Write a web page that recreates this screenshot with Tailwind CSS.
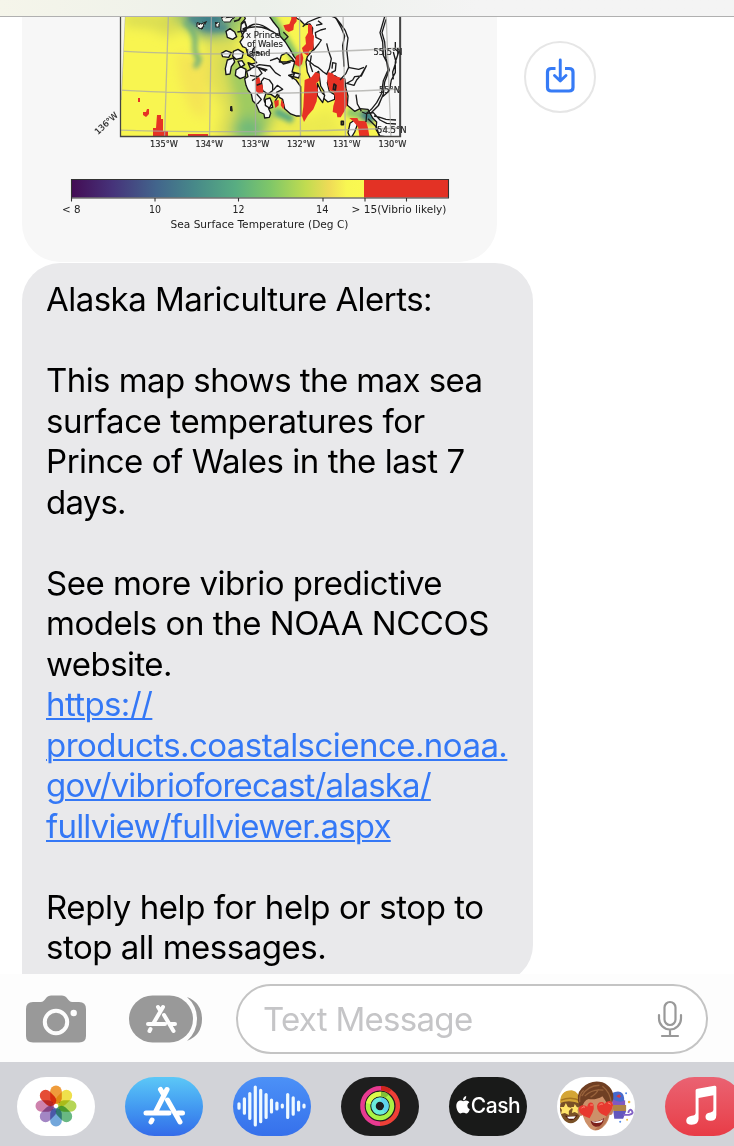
<!DOCTYPE html>
<html lang="en">
<head>
<meta charset="utf-8">
<title>Messages</title>
<script src="https://cdn.jsdelivr.net/npm/@tailwindcss/browser@4"></script>
</head>
<body class="bg-white">
<div class="flex h-[1146px] w-[734px] flex-col overflow-hidden bg-white font-['Inter',sans-serif]">
  <header class="h-[17px] shrink-0 border-b border-[#b0b0b0] bg-linear-to-r from-[#f5f5ea] via-[#ecf0ea] via-35% to-[#f4f4f4] to-65%"></header>

  <main class="flex h-[957px] shrink-0 flex-col overflow-hidden pl-[22px]">
    <div class="flex h-[246px] shrink-0 items-start gap-[27px]">
      <div class="h-[245px] w-[475px] shrink-0 overflow-hidden rounded-b-[38px] bg-[#f7f7f7]">
        <svg class="block" width="475" height="245" viewBox="22 17 475 245" font-family="DejaVu Sans, sans-serif" fill="#222">
          <defs>
            <clipPath id="map"><rect x="120.500" y="10" width="280" height="126"/></clipPath>
            <filter id="soft" x="-50%" y="-50%" width="200%" height="200%"><feGaussianBlur stdDeviation="6"/></filter>
            <filter id="soft2" x="-50%" y="-50%" width="200%" height="200%"><feGaussianBlur stdDeviation="2.500"/></filter>
            <filter id="jag" x="-5%" y="-5%" width="110%" height="110%"><feTurbulence type="fractalNoise" baseFrequency=".18" numOctaves="2" seed="4"/><feDisplacementMap in="SourceGraphic" scale="3" xChannelSelector="R" yChannelSelector="G"/></filter>
            <linearGradient id="bar"><stop offset="0" stop-color="#430c54"/><stop offset=".14" stop-color="#46337a"/><stop offset=".29" stop-color="#42658c"/><stop offset=".42" stop-color="#478989"/><stop offset=".56" stop-color="#58ad82"/><stop offset=".68" stop-color="#80c768"/><stop offset=".8" stop-color="#c1dc50"/><stop offset=".88" stop-color="#efdb57"/><stop offset=".94" stop-color="#f8f752"/><stop offset="1" stop-color="#faf951"/></linearGradient>
          </defs>
          <g clip-path="url(#map)">
            <rect x="119" y="10" width="283" height="128" fill="#f8f550"/>
            <g filter="url(#soft)">
              <path d="M124 14H170L185 27L170 37L150 28L124 26Z" fill="#d9dc52"/>
              <path d="M165 10H250L240 36L215 42L195 36Z" fill="#9bc768"/>
              <path d="M180 8H235L222 30L205 35L192 24Z" fill="#3a7d8b"/>
              <path d="M205 40L235 38L250 90L262 140H215L222 110L208 80Z" fill="#dfdf55"/>
              <path d="M224 60L240 58L256 85L280 110L300 138H228L236 110Z" fill="#9fcb61"/>
              <path d="M236 122L252 116L262 126V140H236Z" fill="#6fb978"/>
              <path d="M176 52L210 60L206 120L190 110L180 80Z" fill="#f4e455"/>
              <path d="M276 112L310 118L330 108L345 138H266Z" fill="#ecea50"/>
            </g>
            <g filter="url(#soft2)" fill="none">
              <path d="M184 22Q196 30 195 43T199 58Q199 64 194 67" stroke="#6dae7b" stroke-width="5"/>
              <path d="M190 17Q204 30 228 28" stroke="#4b898a" stroke-width="7"/>
              <path d="M268 12Q280 32 288 45T299 66" stroke="#7dc06b" stroke-width="9"/>
              <path d="M275 111L293 120" stroke="#58a982" stroke-width="8"/>
              <path d="M347 112L375 117" stroke="#8dc56a" stroke-width="9"/>
              <path d="M362 113L374 120" stroke="#3f8189" stroke-width="11"/>
              <path d="M297 72L303 82M296 95L301 115" stroke="#ece84f" stroke-width="6"/>
            </g>
            <g transform="translate(220 12) scale(.33333)" stroke-linejoin="round">
              <g fill="#f8f8f8" stroke="#151515" stroke-width="4">
                <path d="M68 0L76 20L64 34L62 54L70 76L60 90L68 104L78 108L84 130L98 138L110 152L96 156L84 152L92 172L80 178L84 194L74 200L78 220L84 234L94 246L98 266L108 276L118 300L132 306L134 318L148 316L152 304L146 290L158 286L154 268L142 262L134 270L132 262L138 244L154 248L166 256L172 246L178 256L188 262L194 290L212 306L228 312L242 312L242 224L228 204L206 190L236 198L240 186L216 180L224 150L214 146L200 150L178 150L184 130L200 122L216 138L230 158L236 150L222 134L210 112L196 90L180 72L176 50L160 30L146 10L138 0Z"/>
                <path d="M232 0L228 18L240 24L254 38L270 36L278 48L276 80L280 112L262 134L258 150L262 180L274 206L288 184L296 178L302 222L312 238L310 258L324 270L344 262L344 248L328 238L322 212L330 190L346 192L360 204L374 200L378 230L384 252L382 280L404 298L420 290L444 292L458 318L470 330L468 352L480 372L540 380V0Z"/>
                <path d="M4 8L20 0L36 2L40 12L24 26L8 24ZM18 58L30 50L44 60L50 74L38 82L22 76ZM4 124L18 116L34 122L26 136L8 134ZM40 118L54 112L70 122L66 138L48 142L38 132ZM22 144L40 138L44 150L34 164L30 186L18 188L16 170ZM48 174L62 164L78 172L76 194L60 200L46 190ZM54 148L66 146L74 158L62 166Z"/>
                <path d="M124 208L132 198L148 204L158 218L158 236L144 246L128 236ZM292 214L304 240L314 250L308 272L292 250ZM390 334L404 324L412 338L404 360L392 380L384 362ZM136 262L150 258L156 274L148 288L136 280Z"/>
              </g>
              <g fill="#e73225">
                <path d="M190 40L208 36L214 20L212 0L230 10V28L222 38L220 54L206 60L196 54ZM264 36L276 40L278 66L282 72L280 112L268 116L264 132L250 122L246 108L258 96L256 76L264 62ZM228 132L246 122L250 138L246 156L238 164L224 156ZM254 204L274 196L286 180L300 186L298 206L288 214L294 232L290 268L280 292L264 310L252 330L246 312L250 284ZM322 180L338 184L344 192L358 196L376 202L374 222L380 240L382 276L374 296L362 316L352 316L350 304L338 300L340 282L346 262L342 242L328 234L322 210ZM106 198L118 196L122 212L128 220L130 242L118 246L108 238ZM162 266L176 264L176 280L166 288ZM184 262L194 280L190 292L182 280ZM388 318H412L416 326L438 328L444 348L448 372H418L414 344L398 326Z"/>
              </g>
              <g fill="none" stroke="#1b1b1b" stroke-width="4">
                <path d="M248 44L264 30L288 20L304 14L322 8L348 18L362 36L376 56L384 78L380 112L386 166L378 184L360 204M328 0L350 22L364 48L374 72L368 100L372 164M494 14L480 62L488 90L490 130L500 150L504 174L490 206L484 246L470 272L454 292L440 304M498 22L486 62L494 90L498 140L508 174L494 210L490 246L476 280L450 306M526 90V112L536 120L526 150V182L514 204L508 236L486 256L474 282L456 300M520 120L528 150L518 180L520 202"/>
                <path d="M320 94L326 118L334 140L328 170L320 186M334 182L346 176L348 154L338 152L336 170M258 140L282 160L294 166L310 180L322 188M274 130L270 156L278 180M384 166L416 172L432 166M440 160L424 188L410 204L402 220L380 214L398 204L404 194L424 192L438 164M408 248L412 276L420 290L424 298M440 304L460 302L480 324L500 334L528 336M462 312L480 316L498 322L528 324M444 320L470 346L478 372M426 300L440 306L438 330"/>
                <path d="M150 146L172 138L190 156L212 150M92 170L118 158L150 162L166 182L182 192M90 190L114 194L126 184L114 166L138 178M84 154L106 164L142 174M190 60L204 74L192 86M160 234L172 220L188 232L168 242M206 190L224 184L216 202M96 206L112 196M110 246L124 262L112 276M166 266L178 248M280 116L296 96L304 84L288 76L286 62L302 54L318 50M288 40L306 36L294 26"/>
                <path d="M50 0L62 16L56 24L42 28M64 36L74 28L80 46L68 52M52 60L80 56M34 282L36 298M110 220L126 214M342 216L348 220L346 234L340 232ZM364 328H370V338H364Z" stroke-width="5"/>
                <path d="M64 76Q92 10 150 54M68 54Q120 28 178 72M108 104Q92 112 100 134M84 130Q112 112 128 130"/>
              </g>
            </g>
            <g filter="url(#jag)" fill="#f4f4ee" stroke="#202020" stroke-width="1.200"><path d="M197 22.500L201 24L206 22L204 26L201 29L197 27ZM215.500 23L219 22L219 27L216 27ZM222 17L234 16L230 22L224 22Z"/></g>
            <path d="M157 115H161V119H163V131H168V137H153V128H156ZM143 112H146L147 109H149V114L146 117L143 115ZM138 98H140V102H138ZM188 134H208V137H188Z" fill="#e63225"/>
            <path d="M231 106.500V111" stroke="#222" stroke-width="2"/>
            <g fill="none" stroke="#aaa9a6" stroke-opacity=".75" stroke-width="1.300">
              <path d="M125 12L121 100M168.500 12L164.500 138M211.500 12L209.500 138M255.500 12V138M299.500 12L300.500 138M343 12L345.500 138M386 12L391 138M119 51Q240 58 401 48M119 90Q250 97 401 89M119 130Q250 134 401 128"/>
            </g>
            <path d="M119 15L125 15L121 100L119 130Z" fill="#f7f7f7" opacity=".9"/>
          </g>
          <path d="M120.500 10V136.500H400.500V10" fill="none" stroke="#444" stroke-width="1.300"/>
          <g font-size="8.500" lengthAdjust="spacingAndGlyphs" stroke="#222" stroke-width=".15">
            <text x="246" y="38" textLength="34" lengthAdjust="spacingAndGlyphs">x Prince</text><text x="247" y="47" textLength="36" lengthAdjust="spacingAndGlyphs">of Wales</text><text x="246.500" y="56" textLength="24" lengthAdjust="spacingAndGlyphs">Island</text>
            <text x="373.500" y="54.500" textLength="29" lengthAdjust="spacingAndGlyphs">55.5°N</text><text x="379" y="93" textLength="21" lengthAdjust="spacingAndGlyphs">55°N</text><text x="377" y="132.500" textLength="29.500" lengthAdjust="spacingAndGlyphs">54.5°N</text>
            <text x="150" y="146.500" textLength="28" lengthAdjust="spacingAndGlyphs">135°W</text><text x="195.500" y="146.500" textLength="27.500" lengthAdjust="spacingAndGlyphs">134°W</text><text x="241.500" y="146.500" textLength="28" lengthAdjust="spacingAndGlyphs">133°W</text><text x="287" y="146.500" textLength="28" lengthAdjust="spacingAndGlyphs">132°W</text><text x="333" y="146.500" textLength="27.500" lengthAdjust="spacingAndGlyphs">131°W</text><text x="378.500" y="146.500" textLength="28" lengthAdjust="spacingAndGlyphs">130°W</text>
            <text transform="translate(98 135) rotate(-43)" textLength="28" lengthAdjust="spacingAndGlyphs">136°W</text>
          </g>
          <rect x="71.500" y="179.500" width="293" height="18" fill="url(#bar)"/><rect x="364" y="179.500" width="84.500" height="18" fill="#e33225"/>
          <path d="M71.500 179.500H448.500V198H71.500ZM71.500 198v3.500M155 198v3.500M238.500 198v3.500M323 198v3.500M365 198v3.500M406.500 198v3.500" fill="none" stroke="#333" stroke-width="1.100"/>
          <g font-size="10.400" fill="#222">
            <text x="62" y="213" textLength="18.500" lengthAdjust="spacingAndGlyphs">&lt; 8</text><text x="149" y="213" textLength="12" lengthAdjust="spacingAndGlyphs">10</text><text x="232.500" y="213" textLength="12" lengthAdjust="spacingAndGlyphs">12</text><text x="316" y="213" textLength="12.500" lengthAdjust="spacingAndGlyphs">14</text><text x="351.500" y="213" textLength="95" lengthAdjust="spacingAndGlyphs">&gt; 15(Vibrio likely)</text><text x="170.500" y="228" textLength="178" lengthAdjust="spacingAndGlyphs">Sea Surface Temperature (Deg C)</text>
          </g>
        </svg>
      </div>
      <button class="mt-[24px] flex size-[72px] items-center justify-center rounded-full border-2 border-[#e6e6e6]">
        <svg class="-mt-[2px]" width="32" height="38" viewBox="0 0 32 38" fill="none" stroke="#367bf6" stroke-linejoin="round"><path d="M11.500 11.500H7.500Q3.500 11.500 3.500 15V30.500Q3.500 34 7.500 34H25Q29 34 29 30.500V15Q29 11.500 25 11.500H21" stroke-width="3.200"/><path d="M16.250 3V24M10.500 18.500L16.250 24L22 18.500" stroke-width="2.900" stroke-linecap="round"/></svg>
      </button>
    </div>

    <div class="h-[720px] w-[511px] shrink-0 rounded-t-[38px] rounded-br-[38px] bg-[#e9e9eb] pl-[24px] pt-[16px] text-[33px] leading-[40.500px] whitespace-nowrap text-black">
      <p><span class="tracking-[-0.53px]">Alaska Mariculture Alerts:</span></p>
      <p class="mt-[40.500px]"><span class="tracking-[-0.57px]">This map shows the max sea</span><br><span class="tracking-[-0.39px]">surface temperatures for</span><br><span class="tracking-[-0.45px]">Prince of Wales in the last 7</span><br><span class="tracking-[-0.8px]">days.</span></p>
      <p class="mt-[40.500px]"><span class="tracking-[-0.5px]">See more vibrio predictive</span><br><span class="tracking-[-0.46px]">models on the NOAA NCCOS</span><br><span class="tracking-[-0.57px]">website.</span><br><a class="text-[#3478f6] underline decoration-2 underline-offset-[2px]"><span class="tracking-[-0.61px]">https://</span><br><span class="tracking-[-0.54px]">products.coastalscience.noaa.</span><br><span class="tracking-[-0.83px]">gov/vibrioforecast/alaska/</span><br><span class="tracking-[-0.8px]">fullview/fullviewer.aspx</span></a></p>
      <p class="mt-[40.500px]"><span class="tracking-[-0.42px]">Reply help for help or stop to</span><br><span class="tracking-[-0.48px]">stop all messages.</span></p>
    </div>
  </main>

  <section class="flex h-[88px] shrink-0 items-center bg-[#fdfdfd] pt-[2px] pl-[26px]">
    <svg width="60" height="48" viewBox="0 0 60 48"><path d="M7 7H15Q17 7 18.500 5L21 2Q22.500.5 25 .5H36Q38.500.5 40 2L42.500 5Q44 7 46 7H53Q60 7 60 14V41Q60 47.500 53 47.500H7Q0 47.500 0 41V14Q0 7 7 7Z" fill="#999"/><circle cx="30" cy="27" r="11.200" fill="none" stroke="#fdfdfd" stroke-width="4"/><circle cx="47.700" cy="18" r="3.200" fill="#fdfdfd"/></svg>
    <svg class="ml-[43px]" width="74" height="48" viewBox="0 0 74 48"><rect y=".5" width="64" height="47" rx="23.500" fill="#999"/><path d="M58 2Q73 8 73 24T58 46Q68 37 68 24T58 2Z" fill="#999"/><g stroke="#fdfdfd" stroke-width="4" stroke-linecap="round"><path d="M34 12L24 29M29 12L31.500 16M35 20L44.500 36M19 29H36M42 29H46M21.500 34L20.500 36"/></g></svg>
    <div class="ml-[33px] flex h-[70px] w-[472px] items-center justify-between rounded-full border-2 border-[#c4c4c4] bg-white pr-[23px] pl-[25px]">
      <span class="text-[33px] leading-[40px] tracking-[-0.7px] text-[#c5c5c7]">Text Message</span>
      <svg width="26" height="38" viewBox="0 0 26 38" fill="none" stroke="#999" stroke-width="2.200" stroke-linecap="round"><rect x="7.500" y="2" width="11" height="23" rx="5.500"/><path d="M2 15V18.500A11 11 0 0 0 24 18.500V15M13 30V36M5 36H21"/></svg>
    </div>
  </section>

  <nav class="flex h-[84px] shrink-0 gap-[30px] bg-[#d2d3d8] pt-[14.500px] pl-[17px]">
    <div class="flex h-[59px] w-[78px] shrink-0 items-center justify-center rounded-[30px] bg-white">
      <svg width="44" height="44" viewBox="-22 -22 44 44"><g class="mix-blend-multiply"><rect x="-5.800" y="-20.500" width="11.600" height="18.500" rx="5.800" fill="#ef9c3b"/></g><g class="mix-blend-multiply" transform="rotate(45)"><rect x="-5.800" y="-20.500" width="11.600" height="18.500" rx="5.800" fill="#efe04c"/></g><g class="mix-blend-multiply" transform="rotate(90)"><rect x="-5.800" y="-20.500" width="11.600" height="18.500" rx="5.800" fill="#b5d556"/></g><g class="mix-blend-multiply" transform="rotate(135)"><rect x="-5.800" y="-20.500" width="11.600" height="18.500" rx="5.800" fill="#69b883"/></g><g class="mix-blend-multiply" transform="rotate(180)"><rect x="-5.800" y="-20.500" width="11.600" height="18.500" rx="5.800" fill="#73a7db"/></g><g class="mix-blend-multiply" transform="rotate(225)"><rect x="-5.800" y="-20.500" width="11.600" height="18.500" rx="5.800" fill="#a386c4"/></g><g class="mix-blend-multiply" transform="rotate(270)"><rect x="-5.800" y="-20.500" width="11.600" height="18.500" rx="5.800" fill="#ce82ad"/></g><g class="mix-blend-multiply" transform="rotate(315)"><rect x="-5.800" y="-20.500" width="11.600" height="18.500" rx="5.800" fill="#e54d36"/></g><circle r="1.500" fill="#fff"/></svg>
    </div>
    <div class="flex h-[59px] w-[78px] shrink-0 items-center justify-center rounded-[30px] bg-linear-to-b from-[#5cc8f7] to-[#346be9]">
      <svg class="-mt-[2px]" width="44" height="40" viewBox="0 0 44 40" fill="none" stroke="#fff" stroke-width="5" stroke-linecap="round"><path d="M25 4.500L13 28M18.500 4.500L21.500 9.500M25.500 15L38 37M4 28H27M36 28H40.500M10 35L9 37"/></svg>
    </div>
    <div class="flex h-[59px] w-[78px] shrink-0 items-center justify-center rounded-[30px] bg-linear-to-b from-[#4c91f7] to-[#3670eb]">
      <svg width="72" height="46" viewBox="0 0 72 46" stroke="#eef9ff" stroke-width="3.200" stroke-linecap="round"><path d="M3 20.800V25.200M8.400 15.800V30.200M13.800 10.500V35.500M19.300 4V42M24.700 7.300V38.700M30.100 11.500V34.500M35.500 17V29M40.900 20V26M46.300 22V24M51.700 11.500V34.500M57.200 14.800V31.200M62.600 19V27M68 22V24"/></svg>
    </div>
    <div class="flex h-[59px] w-[78px] shrink-0 items-center justify-center rounded-[30px] bg-[#1e1e1e]">
      <svg width="42" height="42" viewBox="-21 -21 42 42" fill="none" stroke-width="4.500"><path d="M2-17.600A17.700 17.700 0 0 1 0 17.700" stroke="#ee4037"/><path d="M0 17.700A17.700 17.700 0 1 1 2-17.600" stroke="#e83a91"/><path d="M1-17.700Q7-17.700 10-14.600" stroke="#cf251d"/><circle r="12" stroke="#a9f244"/><path d="M-11.700-2.500A12 12 0 0 1 1-12" stroke="#dcfa4b"/><path d="M1-12Q5-12 7-9.700" stroke="#83bf36"/><circle r="6.500" stroke="#69edda"/><path d="M1-6.400A6.500 6.500 0 0 1 4 5" stroke="#5fd3ec"/></svg>
    </div>
    <div class="flex h-[59px] w-[78px] shrink-0 items-center justify-center rounded-[30px] bg-[#191a19] text-white">
      <svg class="-mt-[2px] mr-[1px]" width="14" height="18" viewBox="0 0 14 18" fill="#fff"><path d="M10.200 0Q7 .8 7 4.300Q10.400 4 10.200 0M7.300 5.200Q8.300 4.500 10 4.500Q12.300 4.500 13.400 6.200Q11.300 7.500 11.300 9.700Q11.300 12.200 13.800 13.200Q12.200 17.500 10.200 17.500C9 17.500 8.700 16.800 7.300 16.800S5.500 17.500 4.400 17.500C2.500 17.500.3 13.500.3 10.100C.3 6.600 2.300 4.500 4.500 4.500C5.700 4.500 6.500 5.200 7.300 5.200Z"/></svg>
      <span class="text-[21px] leading-[26px] font-medium tracking-[-0.5px]">Cash</span>
    </div>
    <div class="flex h-[59px] w-[78px] shrink-0 items-center justify-center overflow-hidden rounded-[30px] bg-white">
      <svg width="79" height="60" viewBox="0 0 79 60">
        <ellipse cx="14" cy="32" rx="11" ry="15.500" fill="#795026"/><path d="M3 27Q3 14 15 14Q23 15 24 28Q13 23 3 27" fill="#d4a536"/><path d="M4 24Q15 20 24 25" fill="none" stroke="#a87621" stroke-width="1.500"/><path d="M9 27L11 31L15 32L12 35L12 39L8 37L4 38L5 34L3 31L7 31ZM18 28L20 31L23 32L21 34L22 38L18 36L15 37L16 33L14 31L17 31Z" fill="#ffe36a"/><path d="M8 40Q16 41 21 39Q17 46 12 44Z" fill="#51180f"/><path d="M10 41L19 40.500L17 43H12Z" fill="#fff"/>
        <path d="M55 17Q67 12 68 22V29H57Z" fill="#4669cd"/><path d="M56 23Q64 28 69 24V30H56Z" fill="#8158c1"/><path d="M56 29H70V35H57Z" fill="#b08345"/><path d="M57 35H70L67 43H58Z" fill="#6357bd"/><path d="M67 39H73Q78 38 76 35T72 37" fill="none" stroke="#8362c6" stroke-width="2"/><path d="M60 20L63 18L65 20L63 22Z" fill="#d63946"/><g fill="#edb83b"><circle cx="73" cy="26" r="1.300"/><circle cx="71" cy="44" r="1"/></g><g fill="#548be8"><circle cx="70" cy="17" r="1"/><circle cx="64" cy="46" r="1"/></g>
        <path d="M25 25Q24 17 38 17Q54 16 54 31Q54 46 46 52Q38 58 32 51Q24 42 25 25Z" fill="#cd9069"/><path d="M46 51Q54 43 53 31Q50 46 38 54Q43 55 46 51Z" fill="#b97652"/><ellipse cx="24" cy="35" rx="3" ry="5" fill="#c27e5a"/><ellipse cx="54" cy="34" rx="2.800" ry="5" fill="#c27e5a"/><path d="M23 31Q18 19 25 12Q34 3 46 6Q58 11 57 23L54 32Q50 26 46 20Q40 24 32 23Q27 24 25 33Z" fill="#6f3f23"/><path d="M25 20Q31 9 43 9M28 20Q36 12 47 14M46 10Q54 16 55 27M23 26Q22 18 27 14M34 21Q40 18 42 13" stroke="#99633c" stroke-width="1.300" fill="none"/><path d="M34 45Q42 47 48 42Q46 52 39 51Q35 50 34 45Z" fill="#7d211c"/><path d="M35 45.500Q42 47 47 43.500L45 46.500Q38 48.500 35 45.500Z" fill="#fff"/>
        <path d="M33 42.500Q22 39 22 33Q23 28 28 29.500Q30 30 30.500 31Q32 25 36 27Q40 31 33 42.500ZM50 40.500Q40 37 40.500 30Q42 25 46 26Q48 26.500 48 28Q52 23 56 26.500Q59 31 50 40.500Z" fill="#e8392f"/><path d="M25 32Q26 30 28 31M43 29Q44 27 46 28M34 29L36 29M52 27L54 28" stroke="#ff8b78" stroke-linecap="round" fill="none"/>
      </svg>
    </div>
    <div class="flex h-[59px] w-[78px] shrink-0 items-center justify-center rounded-[30px] bg-linear-to-b from-[#ea6272] to-[#e83b46]">
      <svg width="79" height="60" viewBox="0 0 79 60" fill="#fff"><path d="M31 14Q31 13 33 12.500L50 9.500Q52 9 52 11V39Q52 45 46 45Q41 45 41 41Q41 37 46 36.500Q49 36 49 34V19L34 22V43Q34 49 27 49Q21.500 49 21.500 45Q21.500 41 27 40Q31 39.500 31 37Z"/></svg>
    </div>
  </nav>
</div>
</body>
</html>
